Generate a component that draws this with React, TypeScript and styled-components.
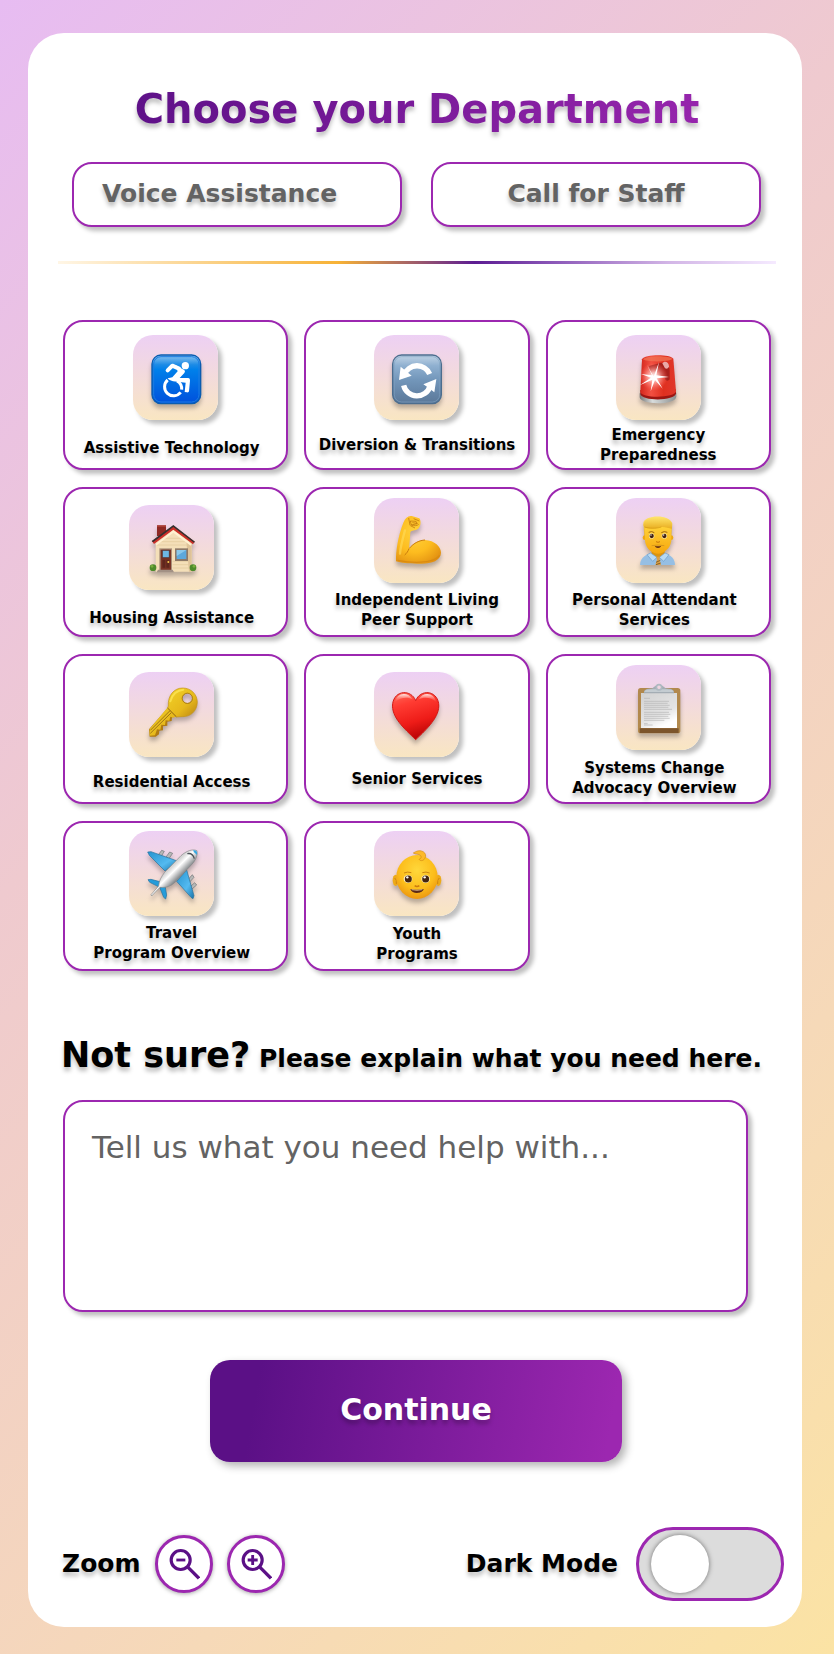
import React, { useState } from "react";
import styled, { createGlobalStyle } from "styled-components";

const PURPLE = "#9c27b0";
const DEEP = "#5b1086";
const TEXT_SHADOW = "0 4px 4px rgba(0, 0, 0, 0.25)";
const BOX_SHADOW = "4px 4px 4px rgba(0, 0, 0, 0.25)";

const GlobalStyle = createGlobalStyle`
  *, *::before, *::after { box-sizing: border-box; }
  body {
    margin: 0;
    color: #000;
    font-family: Verdana, "DejaVu Sans", sans-serif;
  }
  button, textarea { font-family: inherit; }
`;

const Page = styled.div`
  min-height: 100vh;
  padding: 33px 32px 28px 28px;
  background: linear-gradient(135deg, #e7bcf2 0%, #efcacf 36%, #f6d9b8 74%, #fbe3a4 100%);
`;

const Panel = styled.main`
  display: flex;
  flex-direction: column;
  padding: 52px 26px 26px 30px;
  border-radius: 36px;
  background: #fff;
`;

const Title = styled.h1`
  align-self: center;
  margin: 0 0 29px;
  font-size: 40px;
  line-height: 48px;
  text-align: center;
  color: transparent;
  background: linear-gradient(100deg, ${DEEP} -6%, ${PURPLE} 110%);
  background-clip: text;
  -webkit-background-clip: text;
  filter: drop-shadow(0 4px 2px rgba(0, 0, 0, 0.25));
`;

const HelpRow = styled.div`
  display: flex;
  gap: 29px;
  padding: 0 15px 0 14px;
`;

const HelpButton = styled.button<{ $align?: string }>`
  flex: 1;
  height: 65px;
  padding: 0 28px 2px;
  border: 2px solid ${PURPLE};
  border-radius: 20px;
  background: #fff;
  box-shadow: ${BOX_SHADOW};
  color: #636363;
  font-size: 25px;
  font-weight: 700;
  text-align: ${(p) => p.$align || "center"};
  text-shadow: ${TEXT_SHADOW};
`;

const Divider = styled.hr`
  width: 100%;
  height: 3px;
  margin: 34px 0 56px;
  border: 0;
  background: linear-gradient(90deg, #fff6e6 0%, #f7b236 39%, #5c1c92 58%, #8b58b8 69%, #d2b5e6 85%, #f5eaff 100%);
`;

const Grid = styled.div`
  display: grid;
  grid-template-columns: repeat(3, 1fr);
  gap: 17px 16px;
  padding: 0 5px;
`;

const DeptCard = styled.button<{ $top: number }>`
  display: flex;
  flex-direction: column;
  align-items: center;
  min-width: 0;
  height: 150px;
  padding: ${(p) => p.$top}px 0 0;
  border: 2px solid ${PURPLE};
  border-radius: 20px;
  background: #fff;
  box-shadow: ${BOX_SHADOW};
  color: #000;
`;

const Tile = styled.span<{ $shift?: boolean }>`
  display: flex;
  flex: none;
  align-items: center;
  justify-content: center;
  width: 85px;
  height: 85px;
  margin-right: ${(p) => (p.$shift ? 8 : 0)}px;
  padding-top: 3px;
  border-radius: 20px;
  background: linear-gradient(180deg, #edd0f4 0%, #f9e6c2 100%);
  box-shadow: ${BOX_SHADOW};
`;

const Emoji = styled.svg`
  width: 50px;
  height: 50px;
  overflow: visible;
  filter: drop-shadow(0 4px 2px rgba(0, 0, 0, 0.25));
`;

const DeptLabel = styled.span<{ $gap: number; $shift?: boolean }>`
  margin-top: ${(p) => p.$gap}px;
  margin-right: ${(p) => (p.$shift ? 8 : 0)}px;
  font-size: 15px;
  font-weight: 700;
  line-height: 20px;
  text-align: center;
  white-space: pre-line;
  text-shadow: ${TEXT_SHADOW};
`;

const Question = styled.h2`
  margin: 62px 0 19px 3px;
  font-size: 25px;
  line-height: 44px;
  text-shadow: ${TEXT_SHADOW};
`;

const Lead = styled.span`
  font-size: 35px;
`;

const HelpText = styled.textarea`
  height: 212px;
  margin: 0 28px 0 5px;
  padding: 27px;
  border: 2px solid ${PURPLE};
  border-radius: 20px;
  background: #fff;
  box-shadow: ${BOX_SHADOW};
  font-size: 31px;
  line-height: 36px;
  resize: none;
  &::placeholder {
    color: #636363;
    opacity: 1;
  }
`;

const Continue = styled.button`
  align-self: center;
  width: 412px;
  max-width: 100%;
  height: 102px;
  margin: 48px 2px 65px 0;
  padding: 0 0 4px;
  border: 0;
  border-radius: 20px;
  background: linear-gradient(100deg, ${DEEP} 12%, ${PURPLE} 96%);
  box-shadow: 4px 4px 8px rgba(0, 0, 0, 0.3);
  color: #fff;
  font-size: 30px;
  font-weight: 700;
  text-shadow: ${TEXT_SHADOW};
`;

const Footer = styled.footer`
  display: flex;
  align-items: center;
  justify-content: space-between;
  margin: 0 -8px 0 4px;
`;

const Group = styled.div<{ $gap: number }>`
  display: flex;
  align-items: center;
  gap: ${(p) => p.$gap}px;
`;

const Caption = styled.span`
  font-size: 25px;
  font-weight: 700;
  line-height: 32px;
  text-shadow: ${TEXT_SHADOW};
`;

const RoundButton = styled.button`
  display: flex;
  align-items: center;
  justify-content: center;
  width: 58px;
  height: 58px;
  padding: 0;
  border: 3px solid ${PURPLE};
  border-radius: 50%;
  background: #fff;
  box-shadow: 0 1px 4px rgba(0, 0, 0, 0.35);
`;

const Switch = styled.input`
  display: flex;
  align-items: center;
  width: 148px;
  height: 74px;
  margin: 0;
  padding: 0 12px;
  appearance: none;
  border: 3px solid ${PURPLE};
  border-radius: 37px;
  background: #dcdcdc;
  &::before {
    content: "";
    width: 58px;
    height: 58px;
    border-radius: 50%;
    background: #fff;
    box-shadow: 0 0 5px rgba(0, 0, 0, 0.5);
  }
  &:checked {
    justify-content: flex-end;
    background: ${PURPLE};
  }
`;

const Magnifier = ({ plus }: { plus?: boolean }) => (
  <svg width="32" height="32" viewBox="0 0 96 96" fill="none" stroke={DEEP} aria-hidden="true">
    <circle cx="38" cy="36" r="28.5" strokeWidth="9.5" />
    <path d="M58 56L93 91" strokeWidth="10" />
    <path d={plus ? "M23 36H53M38 21V51" : "M25 36H52"} strokeWidth="8.5" />
  </svg>
);

const Wheelchair = () => (
  <>
    <defs>
      <linearGradient id="wc" x2="0" y2="1">
        <stop offset="0" stopColor="#8fc6f0" />
        <stop offset=".2" stopColor="#1c8be6" />
        <stop offset=".3" stopColor="#0080ea" />
        <stop offset="1" stopColor="#0050dc" />
      </linearGradient>
    </defs>
    <rect x="3" y="3" width="146" height="146" rx="27" fill="url(#wc)" stroke="#0a5cb0" strokeWidth="4" />
    <rect x="8" y="8" width="136" height="136" rx="22" fill="none" stroke="#1c7ce0" strokeWidth="3" />
    <circle cx="103" cy="35" r="11" fill="#fff" />
    <path d="M50 49L64 35L84 44" fill="none" stroke="#fff" strokeWidth="12" strokeLinejoin="round" strokeLinecap="round" />
    <path d="M74 34L100 48Q104 52 100 57L86 72H112Q118 73 117 80L114 112Q113 116 108 115L101 114L104 86L66 82Q52 78 50 73Q58 72 64 70L80 52Z" fill="#fff" />
    <path d="M50 78A27 27 0 1 0 89 115M78 81A27 27 0 0 1 92 107" fill="none" stroke="#fff" strokeWidth="9" />
  </>
);

const Arrows = () => (
  <>
    <defs>
      <linearGradient id="ar" x2="0" y2="1">
        <stop offset="0" stopColor="#c3d5e6" />
        <stop offset=".22" stopColor="#8fb0d0" />
        <stop offset=".5" stopColor="#7397bb" />
        <stop offset="1" stopColor="#5a7798" />
      </linearGradient>
    </defs>
    <rect x="2" y="3" width="146" height="146" rx="27" fill="url(#ar)" stroke="#4c6d8e" strokeWidth="4" />
    <rect x="7" y="8" width="136" height="136" rx="22" fill="none" stroke="#7fa1c1" strokeOpacity=".6" strokeWidth="3" />
    <path d="M37 62A41 41 0 0 1 113 60" fill="none" stroke="#fff" strokeWidth="16" />
    <path d="M26 38L21 78L59 65L48 56Z" fill="#fff" />
    <path d="M35 94A41 41 0 0 0 114 97" fill="none" stroke="#fff" strokeWidth="16" />
    <path d="M133 75L94 91L105 98L127 115Z" fill="#fff" />
  </>
);

const Siren = () => (
  <>
    <defs>
      <linearGradient id="sd" x2="1">
        <stop offset="0" stopColor="#d3261c" />
        <stop offset=".3" stopColor="#f25042" />
        <stop offset=".65" stopColor="#df3020" />
        <stop offset="1" stopColor="#e0382c" />
      </linearGradient>
      <linearGradient id="sb" x2="1">
        <stop offset="0" stopColor="#777" />
        <stop offset=".35" stopColor="#d8dcdc" />
        <stop offset="1" stopColor="#8c9090" />
      </linearGradient>
      <radialGradient id="sg">
        <stop offset="0" stopColor="#fff" />
        <stop offset=".3" stopColor="#ffc9c4" stopOpacity=".9" />
        <stop offset="1" stopColor="#ff6a60" stopOpacity="0" />
      </radialGradient>
    </defs>
    <path d="M20 118V130C22 154 128 154 130 128V116Z" fill="url(#sb)" />
    <path d="M22 108V120C26 142 126 142 129 118V106Z" fill="#9c1612" />
    <path d="M27 16C34 0 112 0 121 14L129 112C128 132 24 134 22 113Z" fill="url(#sd)" />
    <path d="M30 16C40 4 110 4 118 15C108 24 42 25 30 16Z" fill="#f17456" opacity=".75" />
    <path d="M48 36L84 26C102 26 112 38 110 54V76C104 84 96 80 96 72L80 66L52 64Z" fill="#a8201b" />
    <path d="M88 28C94 18 108 24 108 37Q106 47 96 43Z" fill="#e9a9a7" />
    <circle cx="62" cy="68" r="42" fill="url(#sg)" />
    <path d="M62 68L78 24L70 64L108 69L71 73L89 104L66 78L53 112L58 77L20 94L54 71L24 60L57 64L42 32Z" fill="#fff" />
  </>
);

const House = () => (
  <>
    <path d="M30 4H57V36H30Z" fill="#8e2923" />
    <path d="M30 4H57V8H30Z" fill="#b4483e" />
    <path d="M26 54L79 12L134 55V143H26Z" fill="#f4dfb8" />
    <path d="M118 52L134 58V143H126Z" fill="#dec298" />
    <path d="M52 43H108M40 53H120M30 63H130M77 112H132M77 122H132M77 132H132" stroke="#e3c99c" strokeWidth="2" />
    <path d="M15 52L79 6L143 53L138 61L79 17L21 60Z" fill="#cb2f28" />
    <path d="M14 51L79 3L144 53L141 56L79 9L18 55Z" fill="#35302f" />
    <path d="M79 19L134 60L131 65L79 26L29 64L26 60Z" fill="#fff1d1" />
    <path d="M37 73H75V142H37Z" fill="#a99079" />
    <path d="M41 77H72V139H41Z" fill="#7b3426" />
    <path d="M46 79H67V101H46Z" fill="#6db8e4" stroke="#4d231b" strokeWidth="2" />
    <path d="M46 107H55V131H46ZM58 107H67V131H58Z" fill="#5f261d" />
    <circle cx="64" cy="114" r="3" fill="#f6c94c" />
    <path d="M84 73H123V111H84Z" fill="#8d7968" />
    <path d="M89 78H118V105H89Z" fill="#5da8db" />
    <path d="M89 78H118L89 96Z" fill="#8ac8ea" />
    <circle cx="18" cy="131" r="10" fill="#4d8b2b" />
    <circle cx="138" cy="131" r="10" fill="#4d8b2b" />
    <circle cx="15" cy="127" r="4" fill="#78ae3d" />
    <circle cx="141" cy="127" r="4" fill="#78ae3d" />
    <path d="M33 137H77L81 145H29Z" fill="#a29185" />
  </>
);

const Muscle = () => (
  <>
    <defs>
      <radialGradient id="mu" cx=".42" cy=".35" r=".75">
        <stop offset="0" stopColor="#ffd23c" />
        <stop offset=".55" stopColor="#fdbc1f" />
        <stop offset="1" stopColor="#e08d10" />
      </radialGradient>
    </defs>
    <path d="M12 133C11 100 19 55 34 17C40 2 49 -5 59 -3L82 4C88 12 87 28 78 36C70 42 58 38 55 46C54 62 53 78 51 95C64 78 82 69 99 69C128 70 147 90 147 107C146 130 120 140 88 140C56 141 29 138 12 133Z" fill="url(#mu)" />
    <path d="M51 95C48 103 44 109 38 114M52 94C66 77 83 70 99 69" fill="none" stroke="#c97b0c" strokeWidth="3" />
    <path d="M50 3L54 25M55 12L72 13L76 20L58 24ZM61 17L75 19M65 5L82 12M58 24C66 28 76 26 80 22M55 26L69 33" fill="none" stroke="#b66b08" strokeWidth="2" strokeLinejoin="round" />
    <path d="M17 130C55 138 122 142 143 115" fill="none" stroke="#d98a10" strokeWidth="4" />
    <path d="M39 40C33 62 26 86 24 110" fill="none" stroke="#ffdc5c" strokeWidth="7" strokeLinecap="round" opacity=".6" />
  </>
);

const Man = () => (
  <>
    <defs>
      <linearGradient id="mf" x2="0" y2="1">
        <stop offset="0" stopColor="#ffd338" />
        <stop offset="1" stopColor="#f7a60d" />
      </linearGradient>
      <linearGradient id="mh" x2="0" y2="1">
        <stop offset="0" stopColor="#ffe46a" />
        <stop offset="1" stopColor="#e9ae20" />
      </linearGradient>
    </defs>
    <path d="M21 144C22 126 31 116 52 109H96C117 117 125 126 126 144Z" fill="#96bfe4" />
    <path d="M55 91H95V113L75 125L56 113Z" fill="#dc940e" />
    <path d="M53 108L72 121L59 133L42 113ZM96 108L79 121L92 133L108 113Z" fill="#b7d9f3" stroke="#6f9dc7" strokeWidth="2" />
    <path d="M70 119H81L80 128L84 144H67L72 128Z" fill="#dda044" />
    <path d="M69 136L82 130M69 143L83 138" stroke="#83612d" strokeWidth="3" />
    <path d="M31 17C36 -6 109 -10 118 20L115 56L34 57Z" fill="url(#mh)" />
    <circle cx="36" cy="62" r="7" fill="#eda813" />
    <circle cx="114" cy="62" r="7" fill="#eda813" />
    <path d="M36 35C46 23 104 24 114 35L115 72C111 98 89 110 75 110C59 110 39 97 36 72Z" fill="url(#mf)" />
    <path d="M31 24C38 -7 104 -6 116 17L117 35C104 33 92 28 81 31C63 36 44 36 34 30Z" fill="url(#mh)" />
    <path d="M34 30C55 36 74 34 85 30" fill="none" stroke="#d39815" strokeWidth="2" />
    <path d="M47 46Q56 41 64 47M85 47Q94 41 103 46" fill="none" stroke="#9b6511" strokeWidth="3" />
    <circle cx="56" cy="57" r="8" fill="#fff0b2" />
    <circle cx="94" cy="57" r="8" fill="#fff0b2" />
    <circle cx="56" cy="57" r="6.5" fill="#402011" />
    <circle cx="94" cy="57" r="6.5" fill="#402011" />
    <circle cx="54" cy="54" r="2" fill="#fff" />
    <circle cx="92" cy="54" r="2" fill="#fff" />
    <path d="M69 74Q75 78 81 74" fill="none" stroke="#c77508" strokeWidth="3" />
    <path d="M65 86Q75 89 85 86Q82 93 75 93Q68 93 65 86Z" fill="#612b13" />
    <path d="M56 86Q75 82 94 86" fill="none" stroke="#c98a1a" strokeWidth="2" />
  </>
);

const Key = () => (
  <>
    <defs>
      <linearGradient id="ke" x2="1" y2="1">
        <stop offset="0" stopColor="#f2d229" />
        <stop offset=".6" stopColor="#e6b81b" />
        <stop offset="1" stopColor="#b98212" />
      </linearGradient>
    </defs>
    <path d="M62 51L88 77L75 79L74 90L61 92V104L48 106V118L37 119L36 130L26 137H8L6 115Z" fill="#b17b12" />
    <path d="M63 48L90 75L79 80L70 77L67 89L56 88L54 102L43 101L40 116L30 115L24 133L8 134V114Z" fill="url(#ke)" />
    <path d="M107 -9C133 -9 151 11 151 34C150 60 131 78 106 77L87 78L62 52L64 45C62 13 81 -9 107 -9ZM121 7A15 15 0 1 0 121 37A15 15 0 1 0 121 7Z" fill="url(#ke)" fillRule="evenodd" stroke="#c19316" strokeWidth="2" />
    <path d="M70 31C75 10 91 -3 109 -4" fill="none" stroke="#ffe95c" strokeWidth="6" strokeLinecap="round" opacity=".7" />
    <path d="M69 59L10 118M73 65L10 127" stroke="#9f7417" strokeWidth="3" />
    <path d="M62 51L88 77" stroke="#9f7417" strokeWidth="3" />
    <circle cx="121" cy="22" r="15.5" fill="none" stroke="#9c7011" strokeWidth="2" />
  </>
);

const Heart = () => (
  <>
    <defs>
      <linearGradient id="he" x2=".3" y2="1">
        <stop offset="0" stopColor="#ff6c5c" />
        <stop offset=".3" stopColor="#ff3b32" />
        <stop offset=".7" stopColor="#ee1c18" />
        <stop offset="1" stopColor="#bf0707" />
      </linearGradient>
      <linearGradient id="hl" x2="0" y2="1">
        <stop offset="0" stopColor="#fff" stopOpacity=".9" />
        <stop offset="1" stopColor="#ff796c" stopOpacity="0" />
      </linearGradient>
    </defs>
    <path d="M71 29C58 -5 8 -4 2 38C-3 78 37 113 71 146C104 115 145 76 140 38C134 -4 84 -5 71 29Z" fill="url(#he)" stroke="#d21712" strokeWidth="3" />
    <path d="M9 34C14 3 48 1 62 25C47 17 24 19 9 34ZM80 25C93 1 127 3 133 34C119 18 95 17 80 25Z" fill="url(#hl)" />
  </>
);

const Clipboard = () => (
  <>
    <defs>
      <linearGradient id="pa" x2=".5" y2="1">
        <stop offset="0" stopColor="#d2d2d2" />
        <stop offset=".7" stopColor="#e4e4e4" />
        <stop offset="1" stopColor="#fff" />
      </linearGradient>
    </defs>
    <rect x="15" y="12" width="127" height="136" rx="8" fill="#b2894d" />
    <path d="M20 133H137V147H20Z" fill="#7c552c" />
    <path d="M24 27H132V132H24Z" fill="url(#pa)" />
    <path d="M33 43H51M33 52H108M33 58H104M33 64H110M33 70H106M33 76H117M33 85H108M33 91H112M33 97H106M33 103H110M33 109H94M33 119H44M33 123H59" stroke="#b4b4b4" strokeWidth="2" />
    <path d="M33 28C32 18 38 14 58 13L68 5H88L98 13C118 14 124 18 123 28Z" fill="#a4adb4" />
    <path d="M34 24C36 17 42 17 60 16H96C114 17 120 17 122 24Z" fill="#c4ccd1" />
    <circle cx="78" cy="10" r="8" fill="#eed4df" stroke="#aeb9c1" strokeWidth="5" />
  </>
);

const Plane = () => (
  <>
    <defs>
      <linearGradient id="pl" gradientUnits="userSpaceOnUse" x1="75" y1="50" x2="102" y2="77">
        <stop offset="0" stopColor="#d5d5d5" />
        <stop offset=".35" stopColor="#fff" />
        <stop offset="1" stopColor="#85898c" />
      </linearGradient>
      <linearGradient id="pw" x2="1" y2="1">
        <stop offset="0" stopColor="#2592cf" />
        <stop offset=".6" stopColor="#54baf0" />
        <stop offset="1" stopColor="#1973a8" />
      </linearGradient>
    </defs>
    <path d="M33 16L44 1L52 4L42 20ZM57 21L68 6L77 10L65 27ZM124 88L136 74L141 82L129 95ZM131 109L143 98L149 105L135 117Z" fill="#b7b8b7" stroke="#6b7072" strokeWidth="2" />
    <path d="M2 6L12 5L91 33L54 63L7 16Z" fill="url(#pw)" stroke="#24709c" strokeWidth="2" />
    <path d="M89 94L119 60L141 137L138 146L132 142Z" fill="url(#pw)" stroke="#24709c" strokeWidth="2" />
    <path d="M3 89L12 88L43 96L38 112L8 97ZM38 112L54 107L59 135L56 147L50 142Z" fill="#249cda" stroke="#24709c" strokeWidth="2" />
    <path d="M150 2C153 20 143 35 127 51L82 99C66 112 52 113 39 112L14 138L12 134L35 108C36 92 43 80 53 67L102 17C118 3 136 -4 150 2Z" fill="url(#pl)" stroke="#838688" strokeWidth="2" />
    <path d="M121 11Q137 8 142 26" fill="none" stroke="#4b5157" strokeWidth="4" />
    <path d="M138 1Q153 -1 150 15L141 7Z" fill="#36a7e0" />
  </>
);

const Baby = () => (
  <>
    <defs>
      <radialGradient id="ba" cx=".5" cy=".35" r=".65">
        <stop offset="0" stopColor="#ffd83b" />
        <stop offset=".65" stopColor="#fcbd1b" />
        <stop offset="1" stopColor="#ec9710" />
      </radialGradient>
    </defs>
    <ellipse cx="11" cy="91" rx="9" ry="17" fill="#edaa19" />
    <ellipse cx="139" cy="91" rx="9" ry="17" fill="#edaa19" />
    <path d="M8 84Q15 88 13 102M142 84Q135 88 137 102" fill="none" stroke="#cf8410" strokeWidth="3" />
    <ellipse cx="75" cy="81" rx="62" ry="66" fill="url(#ba)" />
    <path d="M71 5C89 -4 107 10 99 24C96 32 86 35 81 28C86 27 90 22 86 17C80 10 70 14 64 9Z" fill="#fdb92a" stroke="#d18c13" strokeWidth="2" />
    <path d="M36 69Q47 64 58 68M91 68Q102 64 113 69" fill="none" stroke="#cb8510" strokeWidth="3" />
    <ellipse cx="48" cy="87" rx="13" ry="12" fill="#fff3c8" />
    <ellipse cx="101" cy="87" rx="13" ry="12" fill="#fff3c8" />
    <circle cx="49" cy="87" r="10.5" fill="#442510" />
    <circle cx="101" cy="87" r="10.5" fill="#442510" />
    <circle cx="46" cy="82" r="3.5" fill="#fff" />
    <circle cx="98" cy="82" r="3.5" fill="#fff" />
    <path d="M68 107Q75 112 82 107" fill="none" stroke="#cc7b0e" strokeWidth="5" />
    <path d="M55 117Q75 121 95 117C92 132 59 133 55 117Z" fill="#592817" />
    <path d="M59 119Q75 123 91 119" fill="none" stroke="#ffe8bd" strokeWidth="2" />
  </>
);

type Dept = {
  label: string;
  Art: () => React.ReactElement;
  top: number;
  gap: number;
  tileShift?: boolean;
  labelShift?: boolean;
};

const departments: Dept[] = [
  { label: "Assistive Technology", Art: Wheelchair, top: 13, gap: 18, labelShift: true },
  { label: "Diversion & Transitions", Art: Arrows, top: 13, gap: 15 },
  { label: "Emergency\nPreparedness", Art: Siren, top: 13, gap: 5 },
  { label: "Housing Assistance", Art: House, top: 16, gap: 18, tileShift: true, labelShift: true },
  { label: "Independent Living\nPeer Support", Art: Muscle, top: 9, gap: 7 },
  { label: "Personal Attendant\nServices", Art: Man, top: 9, gap: 7, labelShift: true },
  { label: "Residential Access", Art: Key, top: 16, gap: 15, tileShift: true, labelShift: true },
  { label: "Senior Services", Art: Heart, top: 16, gap: 12 },
  { label: "Systems Change\nAdvocacy Overview", Art: Clipboard, top: 9, gap: 8, labelShift: true },
  { label: "Travel\nProgram Overview", Art: Plane, top: 8, gap: 7, tileShift: true, labelShift: true },
  { label: "Youth\nPrograms", Art: Baby, top: 8, gap: 8 },
];

export default function App() {
  const [dark, setDark] = useState(false);
  const [need, setNeed] = useState("");

  return (
    <>
      <GlobalStyle />
      <Page>
        <Panel>
          <Title>Choose your Department</Title>
          <HelpRow>
            <HelpButton type="button" $align="left">Voice Assistance</HelpButton>
            <HelpButton type="button">Call for Staff</HelpButton>
          </HelpRow>
          <Divider />
          <Grid>
            {departments.map(({ label, Art, top, gap, tileShift, labelShift }) => (
              <DeptCard key={label} type="button" $top={top}>
                <Tile $shift={tileShift}>
                  <Emoji viewBox="0 0 150 150" aria-hidden="true">
                    <Art />
                  </Emoji>
                </Tile>
                <DeptLabel $gap={gap} $shift={labelShift}>{label}</DeptLabel>
              </DeptCard>
            ))}
          </Grid>
          <Question>
            <label htmlFor="need">
              <Lead>Not sure?</Lead> Please explain what you need here.
            </label>
          </Question>
          <HelpText
            id="need"
            placeholder="Tell us what you need help with..."
            value={need}
            onChange={(e) => setNeed(e.target.value)}
          />
          <Continue type="button">Continue</Continue>
          <Footer>
            <Group $gap={14}>
              <Caption>Zoom</Caption>
              <RoundButton type="button" aria-label="Zoom out">
                <Magnifier />
              </RoundButton>
              <RoundButton type="button" aria-label="Zoom in">
                <Magnifier plus />
              </RoundButton>
            </Group>
            <Group $gap={18}>
              <Caption as="label" htmlFor="dark">Dark Mode</Caption>
              <Switch
                id="dark"
                type="checkbox"
                role="switch"
                checked={dark}
                onChange={(e) => setDark(e.target.checked)}
              />
            </Group>
          </Footer>
        </Panel>
      </Page>
    </>
  );
}
